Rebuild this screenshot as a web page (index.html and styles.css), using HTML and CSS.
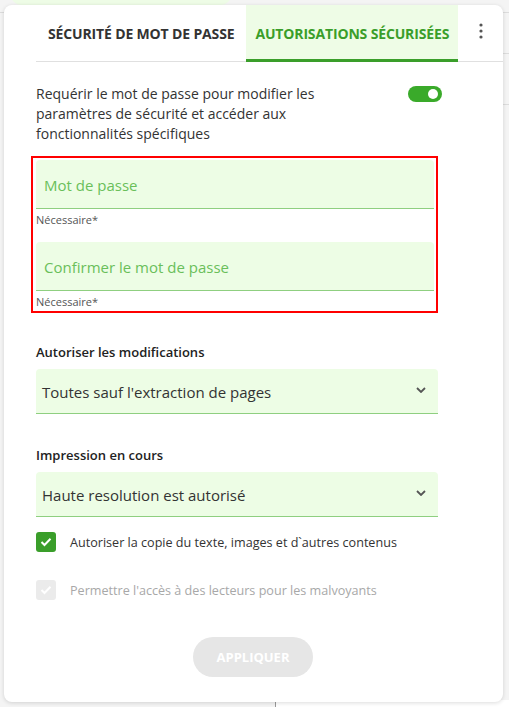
FILE: index.html
```html
<!DOCTYPE html>
<html lang="fr">
<head>
<meta charset="utf-8">
<link rel="stylesheet" href="styles.css">
</head>
<body>
<div class="backdrop">
  <div class="bg-pill"></div>
  <div class="bg-line bg-line-l"></div>
  <div class="bg-line bg-line-r1"></div>
  <div class="bg-line bg-line-r2"></div>
  <div class="bg-line bg-line-r3"></div>
  <div class="bg-bottom"></div>
</div>
<div class="card">
  <div class="tabs">
    <div class="tab">SÉCURITÉ DE MOT DE PASSE</div>
    <div class="tab active">AUTORISATIONS SÉCURISÉES</div>
    <div class="kebab">
      <svg width="4" height="16" viewBox="0 0 4 16"><circle cx="2" cy="2" r="1.6" fill="#555"/><circle cx="2" cy="8" r="1.6" fill="#555"/><circle cx="2" cy="14" r="1.6" fill="#555"/></svg>
    </div>
  </div>
  <div class="content">
    <div class="require-row">
      <p class="require-text">Requérir le mot de passe pour modifier les paramètres de sécurité et accéder aux fonctionnalités spécifiques</p>
      <div class="toggle"><div class="knob"></div></div>
    </div>
    <div class="pw-group">
      <div class="field"><span class="placeholder">Mot de passe</span></div>
      <div class="helper">Nécessaire*</div>
      <div class="field field-2"><span class="placeholder">Confirmer le mot de passe</span></div>
      <div class="helper">Nécessaire*</div>
    </div>
    <div class="label label-1">Autoriser les modifications</div>
    <div class="select">
      <span>Toutes sauf l'extraction de pages</span>
      <svg class="chev" width="10" height="6" viewBox="0 0 10 6"><path d="M1 1 L5 5 L9 1" fill="none" stroke="#555" stroke-width="1.8"/></svg>
    </div>
    <div class="label label-2">Impression en cours</div>
    <div class="select">
      <span>Haute resolution est autorisé</span>
      <svg class="chev" width="10" height="6" viewBox="0 0 10 6"><path d="M1 1 L5 5 L9 1" fill="none" stroke="#555" stroke-width="1.8"/></svg>
    </div>
    <div class="check-row check-1">
      <div class="box on"><svg width="12" height="10" viewBox="0 0 12 10"><path d="M1.5 5 L4.5 8 L10.5 1.8" fill="none" stroke="#fff" stroke-width="2"/></svg></div>
      <span>Autoriser la copie du texte, images et d`autres contenus</span>
    </div>
    <div class="check-row check-2 disabled">
      <div class="box off"><svg width="12" height="10" viewBox="0 0 12 10"><path d="M1.5 5 L4.5 8 L10.5 1.8" fill="none" stroke="#fff" stroke-width="2"/></svg></div>
      <span>Permettre l'accès à des lecteurs pour les malvoyants</span>
    </div>
    <div class="actions">
      <button class="apply">APPLIQUER</button>
    </div>
  </div>
</div>
</body>
</html>
```
FILE: styles.css
```css
* { box-sizing: border-box; }
html, body { margin: 0; padding: 0; }
body {
  width: 509px;
  height: 707px;
  overflow: hidden;
  background: #f4f4f4;
  font-family: "Open Sans", "Noto Sans", sans-serif;
  color: #333;
  position: relative;
}
.backdrop { position: absolute; inset: 0; }
.bg-pill { position: absolute; left: 10px; top: -20px; width: 222px; height: 25px; background: #eefce6; border-radius: 12px; }
.bg-line { position: absolute; height: 1px; background: #dcdcdc; }
.bg-line-l { left: 0; top: 12px; width: 4px; }
.bg-line-r1 { left: 503px; top: 12px; width: 6px; }
.bg-line-r2 { left: 503px; top: 53px; width: 6px; }
.bg-line-r3 { left: 503px; top: 104px; width: 6px; }
.bg-bottom { position: absolute; left: 275px; top: 700px; width: 234px; height: 7px; background: #fff; border-left: 1px solid #999; }

.card {
  position: absolute;
  left: 4px;
  top: 5px;
  width: 499px;
  height: 697px;
  background: #fff;
  border-radius: 8px;
  box-shadow: 0 1px 4px rgba(0,0,0,0.14);
  overflow: hidden;
}
.tabs {
  display: flex;
  align-items: stretch;
  height: 57px;
  margin-left: 32px;
  border-bottom: 1px solid #e0e0e0;
}
.tab {
  display: flex;
  align-items: center;
  padding: 0 12px;
  font-size: 14px;
  font-weight: 700;
  color: #333;
  letter-spacing: -0.15px;
  white-space: nowrap;
}
.tab.active {
  padding: 3px 9px 0 9px;
  background: #eefce6;
  color: #3a9e2a;
  border-bottom: 3px solid #3a9e2a;
  margin-bottom: -1px;
}
.kebab {
  flex: 1;
  display: flex;
  justify-content: center;
  padding-top: 18px;
}
.content {
  padding: 22px 0 0 32px;
  width: 434px;
}
.require-row {
  display: flex;
  justify-content: space-between;
  align-items: flex-start;
}
.require-text {
  margin: 0;
  width: 300px;
  font-size: 14px;
  line-height: 20px;
  color: #333;
}
.toggle {
  width: 34px;
  height: 16px;
  border-radius: 8px;
  background: #3aaa2a;
  margin-top: 2px;
  margin-right: -4px;
  position: relative;
}
.knob {
  position: absolute;
  right: 4px;
  top: 3px;
  width: 10px;
  height: 10px;
  border-radius: 50%;
  background: #fff;
}
.pw-group {
  margin: 12px 0 0 -5px;
  width: 407px;
  border: 2px solid #ff0000;
  padding: 2px 2px 1px 3px;
}
.field {
  height: 49px;
  background: #edfde5;
  border-radius: 4px 4px 0 0;
  border-bottom: 1px solid #8fcf80;
  display: flex;
  align-items: center;
  padding-left: 8px;
  padding-top: 2px;
}
.field-2 { margin-top: 14px; }
.placeholder {
  font-size: 15px;
  color: #6abf5a;
}
.helper {
  font-size: 11px;
  line-height: 16px;
  height: 16px;
  margin-top: 3px;
  color: #555;
}
.label {
  font-size: 13px;
  font-weight: 600;
  line-height: 18px;
  color: #222;
}
.label-1 { margin-top: 30px; }
.label-2 { margin-top: 32px; }
.select {
  margin-top: 8px;
  width: 402px;
  height: 45px;
  background: #edfde5;
  border-radius: 4px 4px 0 0;
  border-bottom: 1px solid #8fcf80;
  display: flex;
  align-items: center;
  justify-content: space-between;
  padding: 1px 12px 0 6px;
  font-size: 15px;
  color: #333;
}
.chev { margin-top: -4px; }
.check-row {
  display: flex;
  align-items: center;
  gap: 14px;
  font-size: 12.6px;
  color: #333;
}
.check-1 { margin-top: 15px; }
.check-2 { margin-top: 28px; }
.box {
  width: 20px;
  height: 20px;
  border-radius: 3px;
  display: flex;
  align-items: center;
  justify-content: center;
}
.box.on { background: #3a9e2a; }
.box.off { background: #ebebeb; }
.disabled span { color: #a8a8a8; }
.actions {
  display: flex;
  justify-content: center;
  margin-top: 37px;
  padding-left: 32px;
}
.apply {
  width: 120px;
  height: 40px;
  border: 0;
  border-radius: 20px;
  background: #e6e6e6;
  color: #fff;
  font-family: "Open Sans", "Noto Sans", sans-serif;
  font-size: 13px;
  font-weight: 700;
}
```
